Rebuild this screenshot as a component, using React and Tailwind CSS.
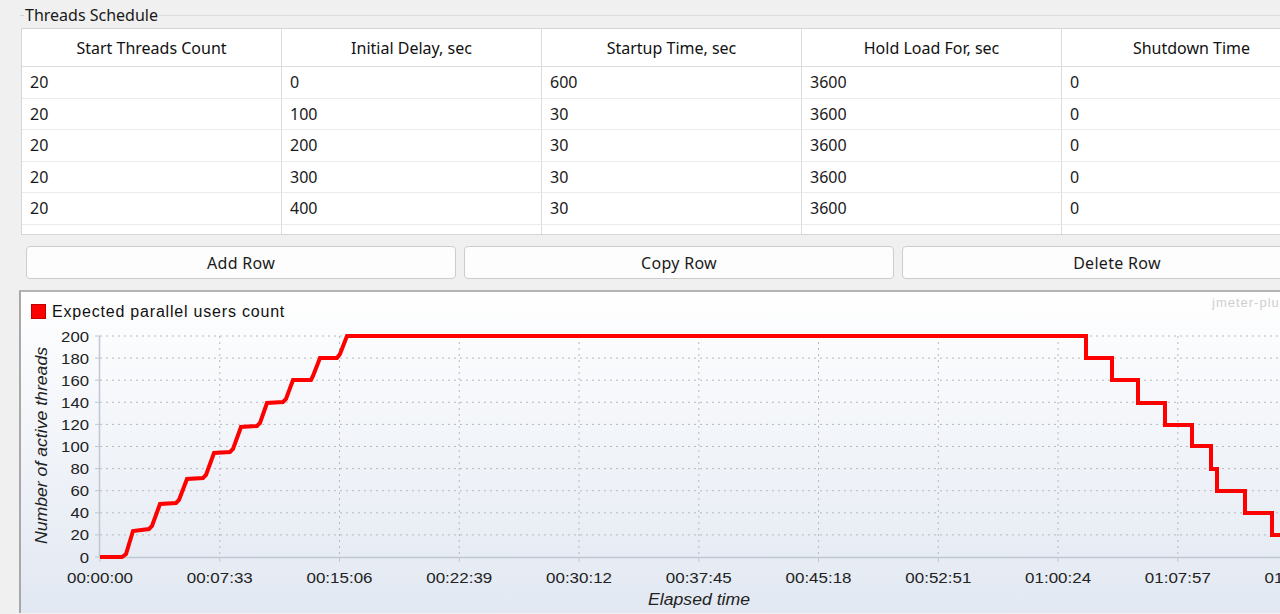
const headers = ["Start Threads Count", "Initial Delay, sec", "Startup Time, sec", "Hold Load For, sec", "Shutdown Time"];
const rows = [
  ["20", "0", "600", "3600", "0"],
  ["20", "100", "30", "3600", "0"],
  ["20", "200", "30", "3600", "0"],
  ["20", "300", "30", "3600", "0"],
  ["20", "400", "30", "3600", "0"],
  ["20", "500", "30", "3600", "0"],
];

const xTicks = ["00:00:00", "00:07:33", "00:15:06", "00:22:39", "00:30:12", "00:37:45", "00:45:18", "00:52:51", "01:00:24", "01:07:57", "01:15:30"];
const yTicks = [0, 20, 40, 60, 80, 100, 120, 140, 160, 180, 200];

// page coordinates of the plot
const X0 = 100;
const Y0 = 558;
const DX = 119.76;
const yOf = (v) => Y0 - v * 1.105;

const line = [
  [100, 558], [122, 558], [126, 555], [133, 532], [149, 530], [152, 527], [160, 505], [176, 504], [179, 501],
  [187, 480], [203, 479], [206, 476], [214, 454], [230, 453], [233, 450], [241, 428], [257, 427], [260, 424],
  [267, 404], [283, 403], [286, 400], [293, 381], [311, 381], [313, 377], [320, 359], [337, 359], [340, 355],
  [347, 337], [1086, 337], [1086, 359], [1112, 359], [1112, 381], [1138, 381], [1138, 404], [1165, 404],
  [1165, 426], [1192, 426], [1192, 447], [1211, 447], [1211, 470], [1217, 470], [1217, 492], [1245, 492],
  [1245, 514], [1272, 514], [1272, 536], [1284, 536],
];

function Chart() {
  return (
    <svg width="1259" height="289" viewBox="21 325 1259 289" className="block" style={{ fontFamily: "'Liberation Sans', Arial, sans-serif" }}>
      {yTicks.slice(1).map((v) => (
        <line key={v} x1={X0} x2={1280} y1={yOf(v)} y2={yOf(v)} stroke="#b9b9b9" strokeWidth="1" strokeDasharray="2 4" />
      ))}
      {xTicks.slice(1).map((_, i) => (
        <line key={i} x1={X0 + DX * (i + 1)} x2={X0 + DX * (i + 1)} y1={yOf(200)} y2={Y0} stroke="#b9b9b9" strokeWidth="1" strokeDasharray="2 4" />
      ))}
      <line x1={X0} x2={1280} y1={Y0 + 0.5} y2={Y0 + 0.5} stroke="#bfc7d3" strokeWidth="1.5" />
      <line x1={X0 - 0.5} x2={X0 - 0.5} y1={yOf(200)} y2={Y0} stroke="#bfc7d3" strokeWidth="1.5" />
      {yTicks.map((v) => (
        <g key={v}>
          <line x1={95} x2={X0} y1={yOf(v)} y2={yOf(v)} stroke="#bfc7d3" strokeWidth="1" />
          <text x={89} y={yOf(v) + 5.5} textAnchor="end" fontSize="15" fill="#222" textLength={String(v).length * 9.3} lengthAdjust="spacingAndGlyphs">
            {v}
          </text>
        </g>
      ))}
      {xTicks.map((t, i) => (
        <g key={t}>
          <line x1={X0 + DX * i} x2={X0 + DX * i} y1={Y0} y2={Y0 + 5} stroke="#bfc7d3" strokeWidth="1" />
          <text x={X0 + DX * i - 33} y={584} fontSize="15" fill="#222" textLength="66" lengthAdjust="spacingAndGlyphs">
            {t}
          </text>
        </g>
      ))}
      <polyline
        points={line.map((p) => p.join(",")).join(" ")}
        fill="none"
        stroke="#ff0000"
        strokeWidth="4"
        strokeLinejoin="miter"
      />
      <text x={699 - 51} y={606} fontSize="16" fontStyle="italic" fill="#222" textLength="102" lengthAdjust="spacingAndGlyphs">
        Elapsed time
      </text>
      <text
        transform="translate(47 545) rotate(-90)"
        x={0}
        y={0}
        fontSize="16"
        fontStyle="italic"
        fill="#222"
        textLength="197"
        lengthAdjust="spacingAndGlyphs"
      >
        Number of active threads
      </text>
    </svg>
  );
}

export default function App() {
  return (
    <div className="w-[1280px] h-[614px] overflow-hidden bg-[#f0f0f0] text-[#1a1a1a] font-['Noto_Sans',sans-serif]">
      <div className="pl-[20px] pt-[5px]">
        <div className="flex items-center h-[20px]">
          <div className="w-[4px] h-px bg-[#d4d4d4]" />
          <span className="px-[1px] text-[16px] leading-none">Threads Schedule</span>
          <div className="flex-1 h-px bg-[#dcdcdc]" />
        </div>
        <div className="mt-[3px] ml-[1px] h-[207px] overflow-hidden border-l border-t border-b border-[#d6d6d6] bg-white">
          <div className="grid grid-cols-[260px_260px_260px_260px_260px] w-[1300px]">
            {headers.map((h) => (
              <div key={h} className="h-[38px] flex items-center justify-center border-r border-b border-[#dcdcdc] text-[16px] text-[#111]">
                {h}
              </div>
            ))}
            {rows.map((r, ri) =>
              r.map((c, ci) => (
                <div key={ri + "-" + ci} className="h-[31.5px] flex items-center pl-[8px] border-r border-b border-r-[#dcdcdc] border-b-[#ebebeb] text-[16px]">
                  {c}
                </div>
              ))
            )}
          </div>
        </div>
      </div>

      <div className="mt-[11px] pl-[26px] flex gap-[8px] overflow-hidden">
        {["Add Row", "Copy Row", "Delete Row"].map((b) => (
          <button key={b} className="w-[430px] h-[33px] shrink-0 rounded-[4px] border border-[#cccccc] bg-[#fdfdfd] text-[16px] tracking-[0.3px] text-[#1a1a1a]">
            {b}
          </button>
        ))}
      </div>

      <div className="relative mt-[11px] ml-[19px] h-[323px] border-l-2 border-t-2 border-l-[#a8a8a8] border-t-[#b4b4b4] bg-linear-to-b from-white to-[#e2e8f2] overflow-hidden">
        <div className="h-[32px] pt-[12px] pl-[10px] flex items-start gap-[6px] font-['Liberation_Sans',Arial,sans-serif]">
          <div className="w-[15px] h-[15px] bg-[#ff0000] border border-[#c00000]" />
          <span className="text-[16px] leading-[16px] tracking-[0.8px] text-[#111]">Expected parallel users count</span>
        </div>
        <span className="absolute top-[1px] left-[1191px] text-[13px] tracking-[1px] text-[#cfcfcf] font-['Liberation_Sans',Arial,sans-serif] whitespace-nowrap">
          jmeter-plugins.org
        </span>
        <Chart />
      </div>
    </div>
  );
}
